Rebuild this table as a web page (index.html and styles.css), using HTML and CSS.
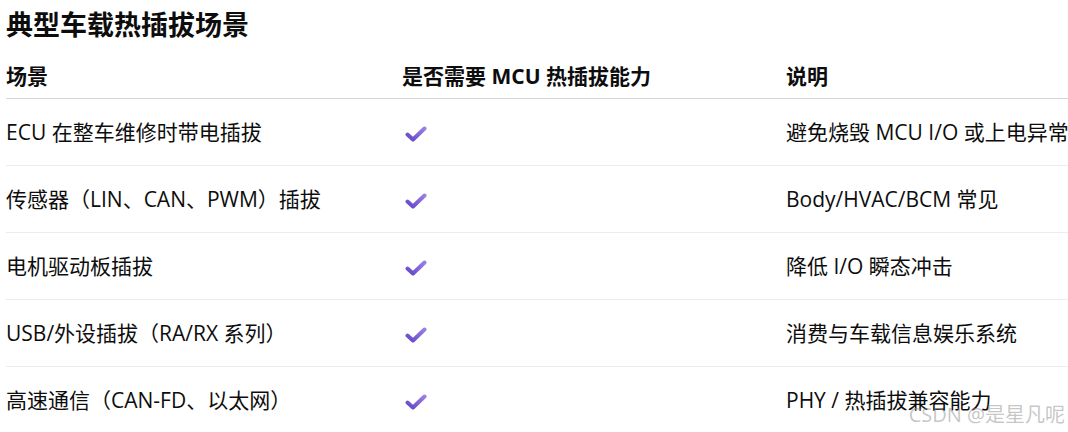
FILE: index.html
```html
<!DOCTYPE html>
<html lang="zh-CN">
<head>
<meta charset="utf-8">
<title>典型车载热插拔场景</title>
<link rel="stylesheet" href="styles.css">
</head>
<body>
<div class="page">
  <h2 class="title">典型车载热插拔场景</h2>
  <table class="tbl">
    <colgroup>
      <col class="c1"><col class="c2"><col class="c3">
    </colgroup>
    <thead>
      <tr><th>场景</th><th>是否需要 MCU 热插拔能力</th><th>说明</th></tr>
    </thead>
    <tbody>
      <tr><td>ECU 在整车维修时带电插拔</td><td><svg class="chk" viewBox="0 0 22 16" width="22" height="16"><defs><linearGradient id="g1" x1="0" y1="1" x2="1" y2="0"><stop offset="0" stop-color="#6546c9"/><stop offset="1" stop-color="#9b7fe3"/></linearGradient></defs><path d="M2.5 8.5 L8 13.5 L19.5 2.5" fill="none" stroke="url(#g1)" stroke-width="4" stroke-linecap="round" stroke-linejoin="round"/></svg></td><td>避免烧毁 MCU I/O 或上电异常</td></tr>
      <tr><td>传感器（LIN、CAN、PWM）插拔</td><td><svg class="chk" viewBox="0 0 22 16" width="22" height="16"><path d="M2.5 8.5 L8 13.5 L19.5 2.5" fill="none" stroke="url(#g1)" stroke-width="4" stroke-linecap="round" stroke-linejoin="round"/></svg></td><td>Body/HVAC/BCM 常见</td></tr>
      <tr><td>电机驱动板插拔</td><td><svg class="chk" viewBox="0 0 22 16" width="22" height="16"><path d="M2.5 8.5 L8 13.5 L19.5 2.5" fill="none" stroke="url(#g1)" stroke-width="4" stroke-linecap="round" stroke-linejoin="round"/></svg></td><td>降低 I/O 瞬态冲击</td></tr>
      <tr><td>USB/外设插拔（RA/RX 系列）</td><td><svg class="chk" viewBox="0 0 22 16" width="22" height="16"><path d="M2.5 8.5 L8 13.5 L19.5 2.5" fill="none" stroke="url(#g1)" stroke-width="4" stroke-linecap="round" stroke-linejoin="round"/></svg></td><td>消费与车载信息娱乐系统</td></tr>
      <tr><td>高速通信（CAN-FD、以太网）</td><td><svg class="chk" viewBox="0 0 22 16" width="22" height="16"><path d="M2.5 8.5 L8 13.5 L19.5 2.5" fill="none" stroke="url(#g1)" stroke-width="4" stroke-linecap="round" stroke-linejoin="round"/></svg></td><td>PHY / 热插拔兼容能力</td></tr>
    </tbody>
  </table>
  <div class="watermark">CSDN @是星凡呢</div>
</div>
</body>
</html>
```

FILE: styles.css
```css
html, body {
  margin: 0;
  padding: 0;
  background: #ffffff;
  overflow: hidden;
}
body {
  width: 1068px;
  height: 432px;
  font-family: "Open Sans", "Noto Sans CJK SC", sans-serif;
  color: #0d0d0d;
}
.page {
  position: relative;
  width: 1068px;
  height: 432px;
  padding-left: 6px;
  box-sizing: border-box;
  overflow: hidden;
}
.title {
  margin: 0;
  padding-top: 8px;
  height: 53px;
  box-sizing: border-box;
  font-size: 27px;
  line-height: 34px;
  font-weight: 700;
}
.tbl {
  border-collapse: collapse;
  table-layout: fixed;
  width: 1200px;
  font-size: 21px;
}
.c1 { width: 396px; }
.c2 { width: 384px; }
.c3 { width: 420px; }
.tbl th {
  text-align: left;
  font-weight: 700;
  padding: 0;
  height: 45px;
  line-height: 28px;
  vertical-align: middle;
  border-bottom: 1.5px solid #d6d6d6;
  white-space: nowrap;
}
.tbl td {
  padding: 0;
  height: 66px;
  line-height: 28px;
  vertical-align: middle;
  border-bottom: 1px solid #ececec;
  white-space: nowrap;
}
.chk {
  display: block;
  margin-left: 3px;
  margin-top: 3px;
}
.watermark {
  position: absolute;
  right: 3px;
  bottom: 6px;
  font-family: "Open Sans", "Noto Sans CJK SC", sans-serif;
  font-size: 20px;
  line-height: 22px;
  color: rgba(150, 150, 150, 0.55);
}
```
